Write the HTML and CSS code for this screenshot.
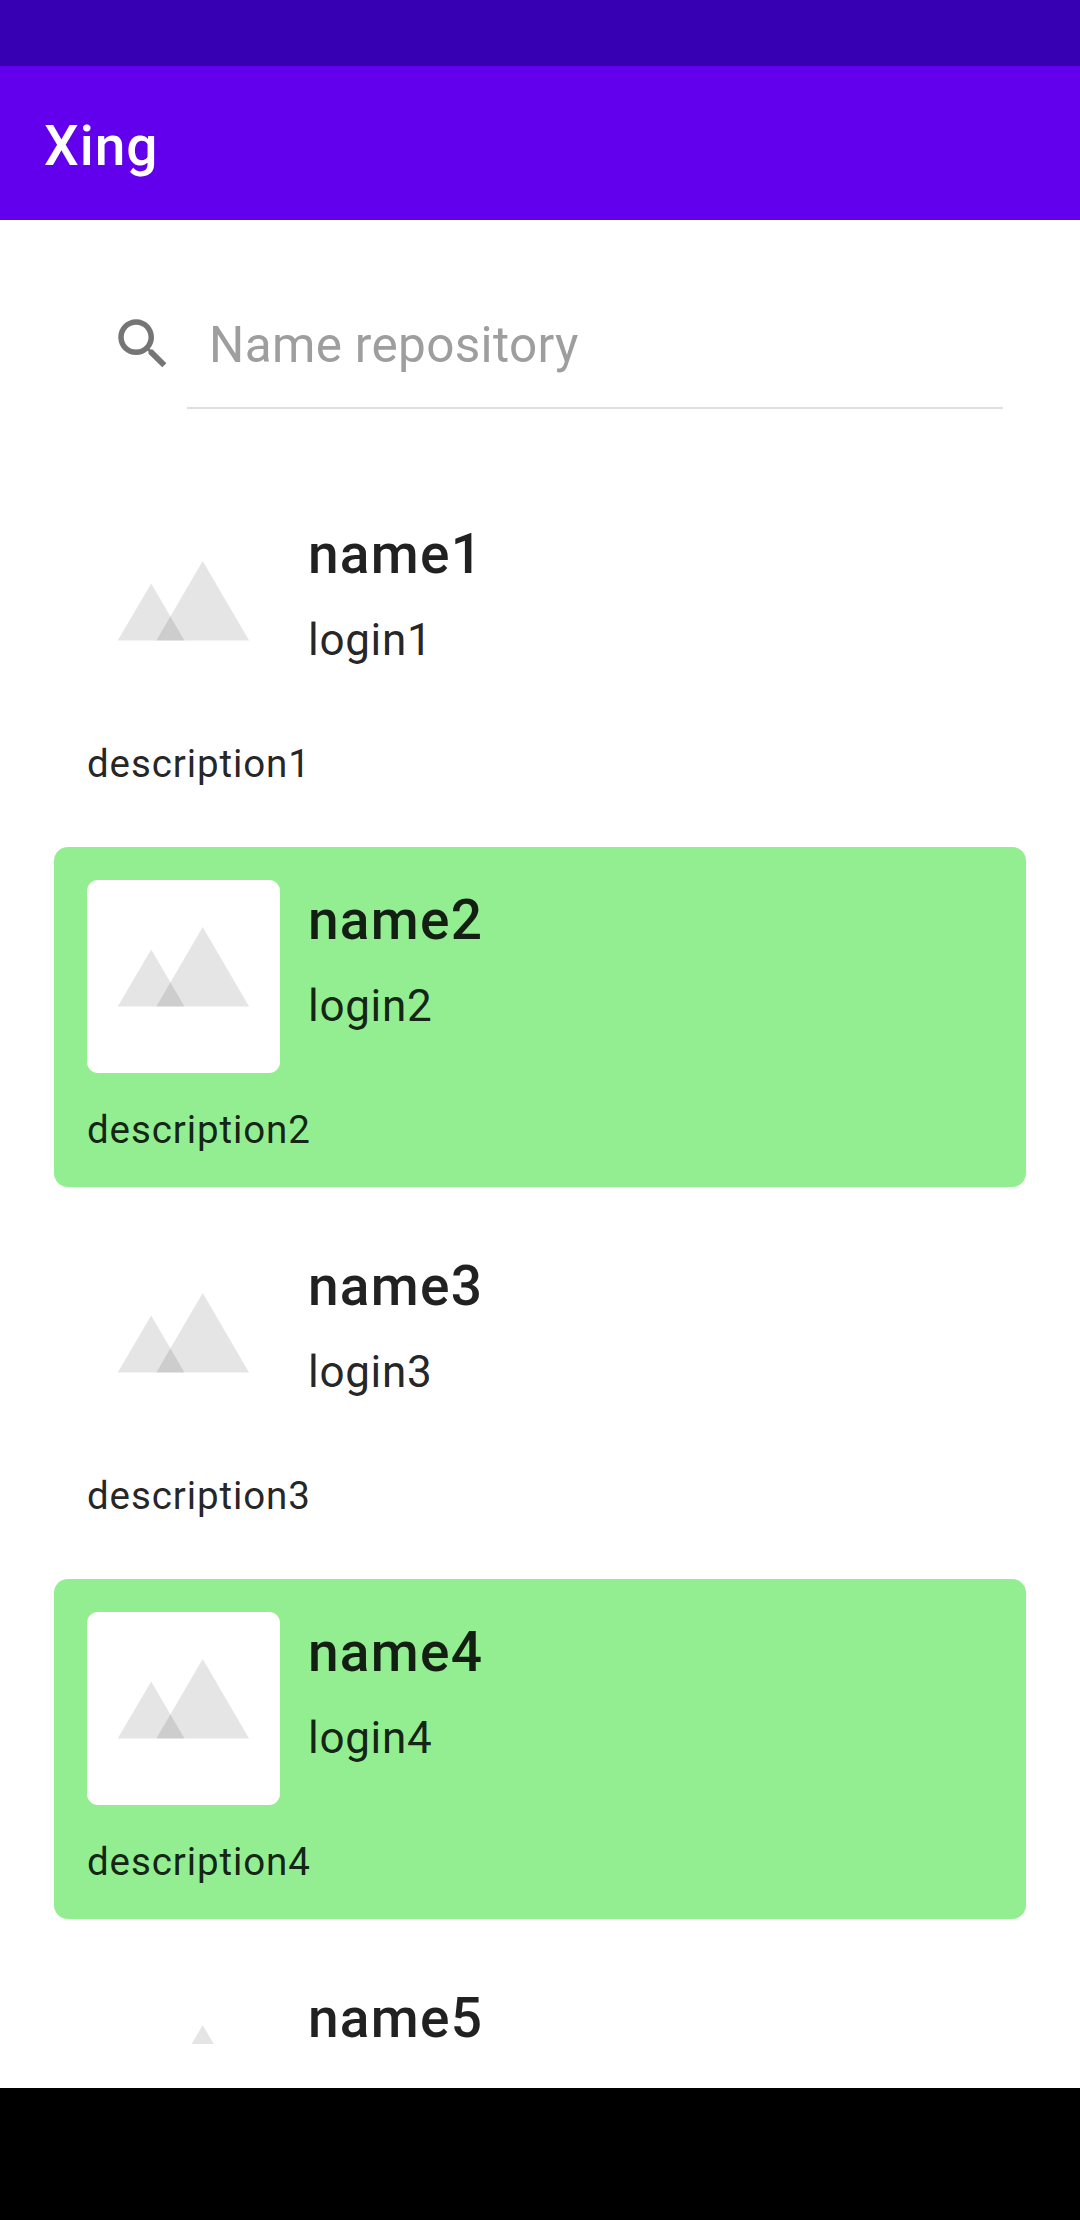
FILE: index.html
```html
<!DOCTYPE html>
<html lang="en">
<head>
<meta charset="utf-8">
<title>Xing</title>
<link rel="stylesheet" href="styles.css">
</head>
<body>
<svg class="defs" aria-hidden="true">
  <symbol id="placeholder" viewBox="0 0 193 193">
    <path d="M30.7 126.6 L64.2 69.4 L97.5 126.6 Z"/>
    <path d="M69.3 126.6 L115.7 47 L162.1 126.6 Z"/>
  </symbol>
</svg>
<div class="screen">
  <div class="status-bar"></div>
  <header class="toolbar"><h1 class="title">Xing</h1></header>
  <main class="content">
    <div class="search">
      <svg class="search-icon" viewBox="0 0 24 24"><path d="M15.5 14h-.79l-.28-.27C15.41 12.59 16 11.11 16 9.5 16 5.91 13.09 3 9.5 3S3 5.91 3 9.5 5.91 16 9.5 16c1.61 0 3.09-.59 4.23-1.57l.27.28v.79l5 4.99L20.49 19l-4.99-5zm-6 0C7.01 14 5 11.99 5 9.5S7.01 5 9.5 5 14 7.01 14 9.5 11.99 14 9.5 14z"/></svg>
      <div class="search-field">Name repository</div>
    </div>
    <div class="list">
      <article class="card">
        <div class="card-head">
          <svg class="thumb"><use href="#placeholder"/></svg>
          <div class="card-text"><h2 class="name">name1</h2><p class="login">login1</p></div>
        </div>
        <p class="description">description1</p>
      </article>
      <article class="card card-fork">
        <div class="card-head">
          <svg class="thumb"><use href="#placeholder"/></svg>
          <div class="card-text"><h2 class="name">name2</h2><p class="login">login2</p></div>
        </div>
        <p class="description">description2</p>
      </article>
      <article class="card">
        <div class="card-head">
          <svg class="thumb"><use href="#placeholder"/></svg>
          <div class="card-text"><h2 class="name">name3</h2><p class="login">login3</p></div>
        </div>
        <p class="description">description3</p>
      </article>
      <article class="card card-fork">
        <div class="card-head">
          <svg class="thumb"><use href="#placeholder"/></svg>
          <div class="card-text"><h2 class="name">name4</h2><p class="login">login4</p></div>
        </div>
        <p class="description">description4</p>
      </article>
      <article class="card">
        <div class="card-head">
          <svg class="thumb"><use href="#placeholder"/></svg>
          <div class="card-text"><h2 class="name">name5</h2></div>
        </div>
      </article>
    </div>
  </main>
  <div class="nav-bar"></div>
</div>
</body>
</html>
```
FILE: styles.css
```css
* {
  box-sizing: border-box;
  margin: 0;
}

body {
  font-family: Roboto, "Liberation Sans", sans-serif;
  color: rgba(0, 0, 0, 0.87);
  background: #fff;
}

.defs {
  display: none;
}

.screen {
  width: 1080px;
  height: 2220px;
  display: flex;
  flex-direction: column;
  overflow: hidden;
}

.status-bar {
  flex: 0 0 66px;
  background: #3700b3;
}

.toolbar {
  flex: 0 0 154px;
  padding: 6px 44px 0;
  display: flex;
  align-items: center;
  background: #6200ee;
}

.title {
  font-size: 55px;
  font-weight: 500;
  line-height: 64px;
  letter-spacing: 1px;
  color: #fff;
}

.content {
  flex: 0 0 1868px;
  min-height: 0;
  padding: 87px 54px 44px;
  display: flex;
  flex-direction: column;
}

.search {
  flex: 0 0 102px;
  margin: 0 23px 0 56px;
  display: flex;
  gap: 11px;
}

.search-icon {
  flex: none;
  width: 66px;
  height: 66px;
  margin-top: 4px;
  fill: #757575;
}

.search-field {
  flex: 1;
  padding: 8px 22px 0;
  font-size: 49.5px;
  line-height: 60px;
  letter-spacing: 0.33px;
  color: #9e9e9e;
  border-bottom: 2px solid #dfdfdf;
}

.list {
  flex: 1 1 0;
  min-height: 0;
  margin-top: 72px;
  display: flex;
  flex-direction: column;
  gap: 26px;
  overflow: hidden;
}

.card {
  flex: 0 0 340px;
  height: 340px;
  padding: 33px 33px 32px;
  border-radius: 14px;
}

.card-fork {
  background: #92ee91;
}

.card-head {
  display: flex;
  gap: 28px;
}

.thumb {
  flex: none;
  width: 193px;
  height: 193px;
  border-radius: 11px;
  background: #fff;
  fill: rgba(0, 0, 0, 0.1);
}

.card-text {
  padding-top: 7px;
}

.name {
  font-size: 55px;
  font-weight: 500;
  line-height: 66px;
  letter-spacing: 1.25px;
}

.login {
  margin-top: 23px;
  font-size: 44px;
  line-height: 60px;
  letter-spacing: 0.7px;
}

.description {
  margin-top: 32px;
  font-size: 38.5px;
  line-height: 50px;
  letter-spacing: 0.9px;
}

.nav-bar {
  flex: 1;
  background: #000;
}
```
